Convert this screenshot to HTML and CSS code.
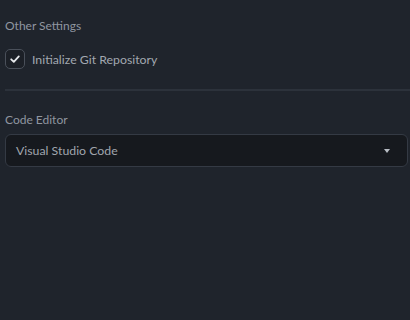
FILE: index.html
```html
<!DOCTYPE html>
<html lang="en">
<head>
    <meta charset="UTF-8">
    <meta name="viewport" content="width=device-width, initial-scale=1.0">
    <title>Project Settings</title>
    <link rel="stylesheet" href="styles.css">
</head>
<body>
    <div class="panel">
        <!-- Other settings -->
        <section class="group">
            <h2 class="group-title">Other Settings</h2>
            <label class="check">
                <span class="check-box">
                    <svg width="12" height="12" viewBox="0 0 12 12">
                        <path d="M2.2 6.3 L4.8 8.8 L9.8 3.4" fill="none" stroke="#e6e8eb" stroke-width="1.8" stroke-linecap="round" stroke-linejoin="round"/>
                    </svg>
                </span>
                <span class="check-label">Initialize Git Repository</span>
            </label>
        </section>

        <hr class="divider">

        <!-- Editor -->
        <section class="group">
            <h2 class="group-title">Code Editor</h2>
            <div class="select">
                <span class="select-value">Visual Studio Code</span>
                <span class="select-arrow"></span>
            </div>
        </section>
    </div>
</body>
</html>
```

FILE: styles.css
```css
body {
    margin: 0;
    padding: 0;
    background-color: #1f242c;
    font-family: "Lato", "Noto Sans", sans-serif;
    color: #a3a9b1;
}
.panel {
    padding: 18px 2px 0 5px;
}
.group-title {
    margin: 0;
    font-size: 12px;
    font-weight: 400;
    line-height: 16px;
    color: #9096a0;
}
.check {
    display: flex;
    align-items: center;
    gap: 7px;
    margin-top: 15px;
}
.check-box {
    width: 18px;
    height: 18px;
    border: 1px solid #4a505a;
    border-radius: 5px;
    display: flex;
    align-items: center;
    justify-content: center;
    background-color: #1c2027;
}
.check-label {
    font-size: 12.3px;
    color: #a2a8b0;
}
.divider {
    border: none;
    height: 2px;
    background-color: #2c323b;
    margin: 20px -2px 0 0;
}
.divider + .group {
    margin-top: 21px;
}
.select {
    margin-top: 6px;
    height: 31px;
    border: 1px solid #343a44;
    border-radius: 6px;
    background-color: #16191e;
    display: flex;
    align-items: center;
    justify-content: space-between;
    padding: 0 17px 0 10px;
}
.select-value {
    font-size: 12.3px;
    color: #a0a6ae;
}
.select-arrow {
    width: 0;
    height: 0;
    border-left: 3.5px solid transparent;
    border-right: 3.5px solid transparent;
    border-top: 4px solid #b8bdc4;
}
```
